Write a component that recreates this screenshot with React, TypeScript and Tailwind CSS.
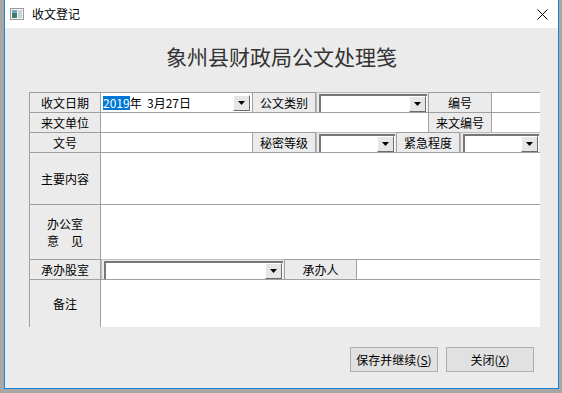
import React from "react";

const font = { fontFamily: '"Noto Sans CJK SC", "Noto Sans", sans-serif' };

function DropBtn() {
  return (
    <div className="flex h-[16px] w-[17px] shrink-0 items-center justify-center border-t border-l border-b border-r border-t-white border-l-white border-b-[#6b6b6b] border-r-[#6b6b6b] bg-[#e6e6e6]">
      <svg width="7" height="4" viewBox="0 0 7 4">
        <path d="M0 0h7L3.5 4z" fill="#000" />
      </svg>
    </div>
  );
}

function Combo({ w }: { w: string }) {
  return (
    <div className={`flex h-[20px] ${w} shrink-0 items-center justify-end border-t border-l border-[#bdbdbd] bg-[#ebebeb] pl-[2px]`}>
      <div className="flex h-[18px] flex-1 items-center justify-end border-t-2 border-l-2 border-t-[#777] border-l-[#777] bg-white pr-[1px]">
        <DropBtn />
      </div>
      <div className="w-[1px]" />
    </div>
  );
}

function Label({ w, h = "h-[20px]", children }: { w: string; h?: string; children: React.ReactNode }) {
  return (
    <div
      className={`flex ${w} ${h} shrink-0 items-center justify-center border-t border-l border-r border-[#a0a0a0] bg-[#ebebeb] text-[12px] leading-[14px] text-black`}
    >
      {children}
    </div>
  );
}

function Value({ w, h = "h-[20px]", children }: { w: string; h?: string; children?: React.ReactNode }) {
  return (
    <div className={`flex ${w} ${h} shrink-0 items-center border-t border-[#a0a0a0] bg-white`}>{children}</div>
  );
}

export default function App() {
  return (
    <div className="h-[393px] w-[562px] overflow-hidden bg-[#a7a7a7]" style={font}>
      <div className="ml-[4px] flex h-[389px] w-[555px] flex-col border-x border-b border-[#1a84d8] bg-[#ebebeb]">
        {/* title bar */}
        <div className="flex h-[28px] items-center bg-white pl-[5px] pr-[10px]">
          <svg width="14" height="12" viewBox="0 0 14 12">
            <rect x="0.5" y="0.5" width="13" height="11" fill="#f4f4f4" stroke="#9a9a9a" />
            <rect x="2" y="2" width="5" height="8" fill="#3d7f6a" />
            <rect x="2" y="2" width="5" height="3" fill="#6fa8c6" />
            <rect x="8" y="2" width="4" height="8" fill="#c9d4dc" />
          </svg>
          <span className="ml-[8px] text-[12px] text-black">收文登记</span>
          <svg className="ml-auto" width="11" height="11" viewBox="0 0 11 11">
            <path d="M0.5 0.5l10 10M10.5 0.5l-10 10" stroke="#000" strokeWidth="1" />
          </svg>
        </div>

        {/* heading */}
        <div className="mt-[16px] text-center text-[21px] leading-[24px] text-[#333]">象州县财政局公文处理笺</div>

        {/* table */}
        <div className="ml-[24px] mt-[24px] flex w-[511px] flex-col">
          <div className="flex">
            <Label w="w-[72px]">收文日期</Label>
            <Value w="w-[151px]">
              <span className="ml-[2px] bg-[#0078d7] text-[12px] leading-[14px] text-white">2019</span>
              <span className="whitespace-pre text-[12px] leading-[14px] text-black">年  3月27日</span>
              <div className="ml-auto mr-[2px]">
                <DropBtn />
              </div>
            </Value>
            <Label w="w-[64px]">公文类别</Label>
            <Combo w="w-[112px]" />
            <Label w="w-[64px]">编号</Label>
            <Value w="w-[48px]" />
          </div>
          <div className="flex">
            <Label w="w-[72px]">来文单位</Label>
            <Value w="w-[327px]" />
            <Label w="w-[64px]">来文编号</Label>
            <Value w="w-[48px]" />
          </div>
          <div className="flex">
            <Label w="w-[72px]">文号</Label>
            <Value w="w-[151px]" />
            <Label w="w-[64px]">秘密等级</Label>
            <Combo w="w-[80px]" />
            <Label w="w-[64px]">紧急程度</Label>
            <Combo w="w-[80px]" />
          </div>
          <div className="flex">
            <Label w="w-[72px]" h="h-[52px]">主要内容</Label>
            <Value w="w-[439px]" h="h-[52px]" />
          </div>
          <div className="flex">
            <Label w="w-[72px]" h="h-[55px]">
              <div className="flex flex-col items-center leading-[17px]">
                <span>办公室</span>
                <span>意　见</span>
              </div>
            </Label>
            <Value w="w-[439px]" h="h-[55px]" />
          </div>
          <div className="flex">
            <Label w="w-[72px]">承办股室</Label>
            <Combo w="w-[183px]" />
            <Label w="w-[73px]">承办人</Label>
            <Value w="w-[183px]" />
          </div>
          <div className="flex">
            <Label w="w-[72px]" h="h-[48px]">备注</Label>
            <Value w="w-[439px]" h="h-[48px]" />
          </div>
        </div>

        {/* buttons */}
        <div className="mt-[20px] flex justify-end gap-[8px] pr-[24px]">
          <button className="h-[25px] w-[88px] border border-[#adadad] bg-[#e1e1e1] text-[12px] text-black">
            保存并继续(<span className="underline">S</span>)
          </button>
          <button className="h-[25px] w-[88px] border border-[#adadad] bg-[#e1e1e1] text-[12px] text-black">
            关闭(<span className="underline">X</span>)
          </button>
        </div>
      </div>
    </div>
  );
}
